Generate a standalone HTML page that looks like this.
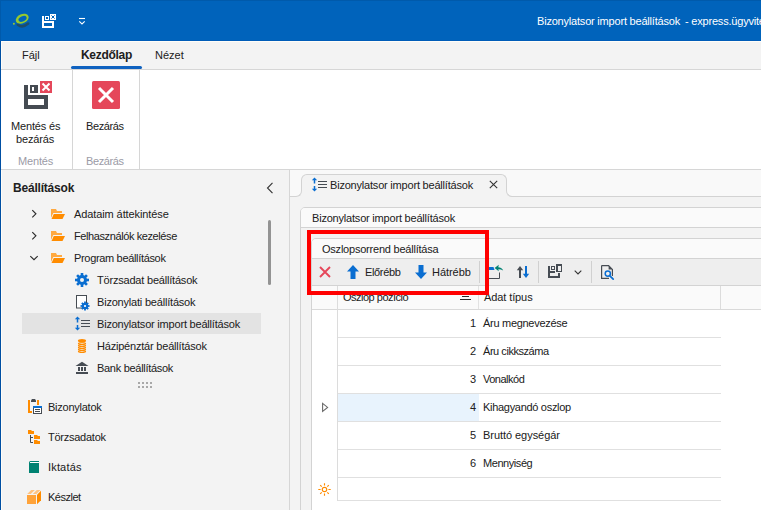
<!DOCTYPE html>
<html><head><meta charset="utf-8">
<style>
html,body{margin:0;padding:0;}
body{width:761px;height:510px;overflow:hidden;position:relative;background:#fafafa;font-family:"Liberation Sans",sans-serif;font-size:11px;color:#202020;}
.a{position:absolute;}
.t{position:absolute;white-space:nowrap;line-height:12px;}
.b{font-weight:bold;}
svg{position:absolute;overflow:visible;}
</style></head><body>

<!-- Title bar -->
<div class="a" style="left:0;top:0;width:761px;height:41px;background:#0063bb;"></div>


<!-- logo -->
<svg style="left:0;top:0" width="40" height="35" viewBox="0 0 40 35">
  <path d="M17.8 24.8 Q22.5 28.4 28.2 23.6" fill="none" stroke="#1c4d6c" stroke-width="2.6" stroke-linecap="round"/>
  <g transform="rotate(-24 22.2 18.7)">
    <path d="M15.4 18.7 A6.8 4.5 0 1 0 29 18.7 A6.8 4.5 0 1 0 15.4 18.7 Z M18.2 18.9 A4.3 2.6 0 1 0 26.8 18.9 A4.3 2.6 0 1 0 18.2 18.9 Z" fill="#95c92e" fill-rule="evenodd"/>
  </g>
  <circle cx="13.9" cy="23.8" r="1" fill="#95c92e"/>
</svg>
<!-- QAT save-close icon -->
<svg style="left:0;top:0" width="60" height="35" viewBox="0 0 60 35" shape-rendering="crispEdges">
  <rect x="42" y="16" width="2" height="12" fill="#fff"/>
  <path d="M42 21 H54 V28 H42 Z M44 23 V26 H52 V23 Z" fill="#fff" fill-rule="evenodd"/>
  <path d="M45 16 H49 V20 H45 Z M46.2 17.2 V18.8 H47.6 V17.2 Z" fill="#fff" fill-rule="evenodd"/>
  <rect x="50" y="14" width="6" height="6" fill="#fff"/>
  <path d="M51.4 15.4 L54.6 18.6 M54.6 15.4 L51.4 18.6" stroke="#0063bb" stroke-width="1" shape-rendering="auto"/>
</svg>
<!-- customize -->
<svg style="left:78px;top:17px" width="8" height="9" viewBox="0 0 8 9">
  <path d="M1 1.5 H7" stroke="#fff" stroke-width="1.1"/>
  <path d="M1.3 4.4 L4 6.9 L6.7 4.4" fill="none" stroke="#fff" stroke-width="1.1"/>
</svg>
<div class="t" style="left:537px;top:15px;color:#fff;letter-spacing:-0.2px;">Bizonylatsor import beállítások</div>
<div class="t" style="left:685px;top:15px;color:#fff;letter-spacing:-0.2px;">- express.ügyvitel</div>

<!-- Ribbon tabs -->
<div class="a" style="left:1px;top:41px;width:760px;height:28px;background:#f3f3f3;"></div>
<div class="a" style="left:1px;top:69px;width:760px;height:1px;background:#d6d6d6;"></div>
<div class="t" style="left:22px;top:49px;">Fájl</div>
<div class="t b" style="left:81px;top:49px;font-size:12px;letter-spacing:-0.3px;">Kezdőlap</div>
<div class="t" style="left:155px;top:49px;">Nézet</div>
<div class="a" style="left:71px;top:66px;width:71px;height:3px;background:#0f62c0;border-radius:2px;"></div>

<!-- Ribbon content -->
<div class="a" style="left:1px;top:70px;width:760px;height:99px;background:#fff;"></div>
<div class="a" style="left:1px;top:169px;width:760px;height:1px;background:#d6d6d6;"></div>
<div class="a" style="left:72px;top:70px;width:1px;height:99px;background:#d6d6d6;"></div>
<div class="a" style="left:139px;top:70px;width:1px;height:99px;background:#d6d6d6;"></div>

<!-- save & close big icon -->
<svg style="left:24px;top:81px" width="28" height="28" viewBox="0 0 28 28">
  <path d="M2 4 V26 H22 V16 H4" fill="none" stroke="#454b52" stroke-width="4"/>
  <rect x="6" y="4" width="8" height="8" fill="#454b52"/>
  <rect x="8" y="6" width="2" height="4" fill="#fff"/>
  <rect x="16" y="0" width="12" height="12" fill="#e5475a"/>
  <path d="M18.5 2.5 L25.5 9.5 M25.5 2.5 L18.5 9.5" stroke="#fff" stroke-width="2"/>
</svg>
<div class="t" style="left:11px;top:120px;letter-spacing:-0.15px;">Mentés és</div>
<div class="t" style="left:16px;top:133px;letter-spacing:-0.15px;">bezárás</div>
<div class="t" style="left:18px;top:155px;color:#9b9ba6;letter-spacing:-0.15px;">Mentés</div>

<!-- close big icon -->
<svg style="left:92px;top:81px" width="28" height="28" viewBox="0 0 28 28">
  <rect x="0" y="0" width="28" height="28" rx="1.5" fill="#e5475a"/>
  <path d="M7 7 L21 21 M21 7 L7 21" stroke="#fff" stroke-width="3"/>
</svg>
<div class="t" style="left:86px;top:120px;letter-spacing:-0.4px;">Bezárás</div>
<div class="t" style="left:86px;top:155px;color:#9b9ba6;letter-spacing:-0.4px;">Bezárás</div>

<!-- Left panel -->
<div class="a" style="left:1px;top:170px;width:288px;height:340px;background:#f3f3f3;"></div>
<div class="a" style="left:289px;top:170px;width:1px;height:340px;background:#d6d6d6;"></div>


<div class="t b" style="left:13px;top:182px;font-size:12px;letter-spacing:-0.2px;">Beállítások</div>
<svg style="left:266px;top:182px" width="8" height="12" viewBox="0 0 8 12">
  <path d="M6.5 0.8 L1.5 6 L6.5 11.2" fill="none" stroke="#333" stroke-width="1.1"/>
</svg>
<!-- scrollbar -->
<div class="a" style="left:268px;top:220px;width:3px;height:65px;background:#939393;border-radius:1.5px;"></div>

<!-- tree rows -->
<svg style="left:31px;top:209px" width="7" height="10" viewBox="0 0 7 10"><path d="M1.3 1.2 L4.9 4.8 L1.3 8.4" fill="none" stroke="#2a2a2a" stroke-width="1.15"/></svg>
<svg style="left:51px;top:209px" width="15" height="10" viewBox="0 0 15 10"><path d="M0 0 H5 L6 2 H11 V4 H2.5 L0 10 Z" fill="#ffa940"/><path d="M2.2 4.3 H14.6 L11.8 10.6 H-0.6 Z" fill="#f3f3f3"/><path d="M2.8 5 H14 L11.5 10 H0.5 Z" fill="#ff8c00"/></svg>
<div class="t" style="left:74px;top:208px;letter-spacing:-0.1px;">Adataim áttekintése</div>

<svg style="left:31px;top:231px" width="7" height="10" viewBox="0 0 7 10"><path d="M1.3 1.2 L4.9 4.8 L1.3 8.4" fill="none" stroke="#2a2a2a" stroke-width="1.15"/></svg>
<svg style="left:51px;top:231px" width="15" height="10" viewBox="0 0 15 10"><path d="M0 0 H5 L6 2 H11 V4 H2.5 L0 10 Z" fill="#ffa940"/><path d="M2.2 4.3 H14.6 L11.8 10.6 H-0.6 Z" fill="#f3f3f3"/><path d="M2.8 5 H14 L11.5 10 H0.5 Z" fill="#ff8c00"/></svg>
<div class="t" style="left:74px;top:230px;letter-spacing:-0.4px;">Felhasználók kezelése</div>

<svg style="left:29px;top:255px" width="10" height="6" viewBox="0 0 10 6"><path d="M1.3 1.2 L5 4.6 L8.7 1.2" fill="none" stroke="#2a2a2a" stroke-width="1.15"/></svg>
<svg style="left:51px;top:253px" width="15" height="10" viewBox="0 0 15 10"><path d="M0 0 H5 L6 2 H11 V4 H2.5 L0 10 Z" fill="#ffa940"/><path d="M2.2 4.3 H14.6 L11.8 10.6 H-0.6 Z" fill="#f3f3f3"/><path d="M2.8 5 H14 L11.5 10 H0.5 Z" fill="#ff8c00"/></svg>
<div class="t" style="left:74px;top:252px;letter-spacing:-0.33px;">Program beállítások</div>

<!-- child rows -->
<svg style="left:75px;top:273px" width="14" height="14" viewBox="-7 -7 14 14">
  <g fill="#0a6ed1">
    <circle r="5"/>
    <rect x="-1.3" y="-7" width="2.6" height="14"/>
    <rect x="-7" y="-1.3" width="14" height="2.6"/>
    <rect x="-1.3" y="-7" width="2.6" height="14" transform="rotate(45)"/>
    <rect x="-1.3" y="-7" width="2.6" height="14" transform="rotate(-45)"/>
  </g>
  <circle r="2" fill="#f3f3f3"/>
</svg>
<div class="t" style="left:97px;top:274px;letter-spacing:-0.2px;">Törzsadat beállítások</div>

<svg style="left:76px;top:295px" width="14" height="16" viewBox="0 0 14 16">
  <rect x="0.5" y="0.5" width="10" height="12.5" fill="#fff" stroke="#464c53" stroke-width="1"/>
  <g transform="translate(9 11)" fill="#0a6ed1">
    <circle r="3.2"/>
    <rect x="-0.9" y="-4.5" width="1.8" height="9"/>
    <rect x="-4.5" y="-0.9" width="9" height="1.8"/>
    <rect x="-0.9" y="-4.5" width="1.8" height="9" transform="rotate(45)"/>
    <rect x="-0.9" y="-4.5" width="1.8" height="9" transform="rotate(-45)"/>
  </g>
  <circle cx="9" cy="11" r="1.1" fill="#fff"/>
</svg>
<div class="t" style="left:97px;top:296px;letter-spacing:-0.2px;">Bizonylati beállítások</div>

<div class="a" style="left:22px;top:313px;width:239px;height:21px;background:#e3e3e3;"></div>
<svg style="left:74px;top:316px" width="17" height="15" viewBox="0 0 17 15">
  <path d="M3.5 2.5 V6.6 M3.5 8.9 V12.5" stroke="#0a6ed1" stroke-width="1.5"/>
  <path d="M0.8 3.2 L3.5 0.4 L6.2 3.2 Z M0.8 11.8 L3.5 14.6 L6.2 11.8 Z" fill="#0a6ed1"/>
  <path d="M7 4.5 H16 M7 7.5 H16 M7 10.5 H16" stroke="#464c53" stroke-width="1.2"/>
</svg>
<div class="t" style="left:97px;top:318px;letter-spacing:-0.2px;">Bizonylatsor import beállítások</div>

<svg style="left:0;top:0" width="100" height="400" viewBox="0 0 100 400">
  <ellipse cx="82" cy="340.8" rx="4.1" ry="1.8" fill="#ff8c00"/>
  <g fill="none" stroke="#ff8c00" stroke-width="1.05">
    <ellipse cx="82" cy="343.6" rx="3.6" ry="0.95"/>
    <ellipse cx="82" cy="345.6" rx="3.6" ry="0.95"/>
    <ellipse cx="82" cy="347.6" rx="3.6" ry="0.95"/>
    <ellipse cx="82" cy="349.6" rx="3.6" ry="0.95"/>
    <ellipse cx="82" cy="351.6" rx="3.6" ry="0.95"/>
  </g>
</svg>
<div class="t" style="left:97px;top:340px;letter-spacing:-0.2px;">Házipénztár beállítások</div>

<svg style="left:0;top:0" width="100" height="400" viewBox="0 0 100 400">
  <path d="M75.5 366 L82 361.8 L88.5 366 Z" fill="#464c53"/>
  <g fill="#464c53" shape-rendering="crispEdges">
    <rect x="78" y="367" width="2" height="4"/>
    <rect x="81" y="367" width="2" height="4"/>
    <rect x="84" y="367" width="2" height="4"/>
    <rect x="76" y="372" width="12" height="2"/>
  </g>
</svg>
<div class="t" style="left:97px;top:362px;letter-spacing:-0.29px;">Bank beállítások</div>

<!-- splitter grip -->
<svg style="left:138px;top:382px" width="15" height="7" viewBox="0 0 15 7" fill="#a8a8a8">
  <rect x="0" y="0" width="2" height="2"/><rect x="4" y="0" width="2" height="2"/><rect x="8" y="0" width="2" height="2"/><rect x="12" y="0" width="2" height="2"/>
  <rect x="0" y="4" width="2" height="2"/><rect x="4" y="4" width="2" height="2"/><rect x="8" y="4" width="2" height="2"/><rect x="12" y="4" width="2" height="2"/>
</svg>

<!-- nav bar -->
<svg style="left:0;top:0" width="60" height="510" viewBox="0 0 60 510" shape-rendering="crispEdges">
  <rect x="28" y="400" width="2" height="13" fill="#ff8c00"/>
  <rect x="28" y="411" width="4" height="2" fill="#ff8c00"/>
  <rect x="37" y="400" width="2" height="5" fill="#ff8c00"/>
  <path d="M31 402 V400.5 L32 399 H35 L36 400.5 V402 Z" fill="#464c53" shape-rendering="auto"/>
  <rect x="33" y="406" width="9" height="8" fill="#464c53"/>
  <rect x="34" y="408" width="7" height="5" fill="#fff"/>
  <rect x="33" y="406" width="9" height="2" fill="#0a6ed1"/>
  <rect x="35" y="409" width="5" height="1" fill="#464c53"/>
  <rect x="35" y="411" width="5" height="1" fill="#464c53"/>
</svg>
<div class="t" style="left:48px;top:401px;letter-spacing:-0.25px;">Bizonylatok</div>

<svg style="left:0;top:0" width="60" height="510" viewBox="0 0 60 510">
  <path d="M28 430 H31 L32 431 H34 V434 H28 Z" fill="#ff8c00"/>
  <path d="M34 435 H37 L38 436 H40 V439 H34 Z" fill="#ff8c00"/>
  <path d="M34 440 H37 L38 441 H40 V444 H34 Z" fill="#ff8c00"/>
  <path d="M30.5 435 V442.5 H33 M30.5 437.5 H33" fill="none" stroke="#464c53" stroke-width="1"/>
</svg>
<div class="t" style="left:48px;top:431px;letter-spacing:-0.25px;">Törzsadatok</div>

<svg style="left:0;top:0" width="60" height="510" viewBox="0 0 60 510">
  <path d="M29 462.5 Q29 461 30.5 461 H39 V473 H29 Z" fill="#008272"/>
  <rect x="30" y="462" width="9" height="1" fill="#fff"/>
</svg>
<div class="t" style="left:48px;top:461px;letter-spacing:0.17px;">Iktatás</div>

<svg style="left:0;top:0" width="60" height="510" viewBox="0 0 60 510">
  <rect x="27" y="495" width="9" height="9" fill="#ffa33a"/>
  <path d="M37 494.8 L41 490.8 V500.2 L37 504.2 Z" fill="#ff8c00"/>
  <path d="M27.2 494 L31.2 490 H34.8 L30.8 494 Z M32.8 494 L36.8 490 H40.4 L36.4 494 Z" fill="#ffc380"/>
</svg>
<div class="t" style="left:48px;top:491px;letter-spacing:-0.5px;">Készlet</div>


<!-- Right panel -->
<div class="a" style="left:290px;top:170px;width:471px;height:340px;background:#f3f3f3;"></div>
<div class="a" style="left:290px;top:170px;width:471px;height:26px;background:#f9f9f9;"></div>
<div class="a" style="left:290px;top:196px;width:471px;height:1px;background:#d3d3d3;"></div>
<!-- doc tab -->
<div class="a" style="left:301px;top:174px;width:204px;height:16px;background:#f3f3f3;border:1px solid #d3d3d3;border-bottom:none;border-radius:6px 6px 0 0;"></div>
<div class="a" style="left:296px;top:189px;width:215px;height:8px;background:#f3f3f3;"></div>
<div class="a" style="left:291px;top:186px;width:10px;height:10px;background:#f9f9f9;border-right:1px solid #d3d3d3;border-bottom:1px solid #d3d3d3;border-radius:0 0 6px 0;"></div>

<div class="a" style="left:506px;top:186px;width:10px;height:10px;background:#f9f9f9;border-left:1px solid #d3d3d3;border-bottom:1px solid #d3d3d3;border-radius:0 0 0 6px;"></div>
<div class="a" style="left:302px;top:197px;width:205px;height:10px;background:#f3f3f3;"></div>

<svg style="left:311px;top:177px" width="17" height="15" viewBox="0 0 17 15">
  <path d="M3.5 2.5 V6.6 M3.5 8.9 V12.5" stroke="#0a6ed1" stroke-width="1.5"/>
  <path d="M0.8 3.2 L3.5 0.4 L6.2 3.2 Z M0.8 11.8 L3.5 14.6 L6.2 11.8 Z" fill="#0a6ed1"/>
  <path d="M7 4.5 H16 M7 7.5 H16 M7 10.5 H16" stroke="#464c53" stroke-width="1.2"/>
</svg>
<div class="t" style="left:330px;top:179px;letter-spacing:-0.2px;">Bizonylatsor import beállítások</div>
<svg style="left:489px;top:180px" width="9" height="9" viewBox="0 0 9 9"><path d="M0.8 0.8 L8.2 8.2 M8.2 0.8 L0.8 8.2" stroke="#333" stroke-width="1.1"/></svg>

<!-- group box -->
<div class="a" style="left:300px;top:207px;width:470px;height:320px;background:#f3f3f3;border:1px solid #d3d3d3;border-radius:5px;"></div>
<div class="a" style="left:301px;top:208px;width:460px;height:19px;background:#fafafa;border-radius:4px 0 0 0;"></div>
<div class="a" style="left:301px;top:227px;width:460px;height:1px;background:#d3d3d3;"></div>
<div class="t" style="left:312px;top:212px;letter-spacing:-0.2px;">Bizonylatsor import beállítások</div>

<!-- inner group -->
<div class="a" style="left:311px;top:238px;width:470px;height:300px;background:#f3f3f3;border:1px solid #d3d3d3;border-radius:5px;"></div>
<div class="a" style="left:312px;top:239px;width:449px;height:19px;background:#fafafa;border-radius:4px 0 0 0;"></div>
<div class="a" style="left:312px;top:258px;width:449px;height:1px;background:#d3d3d3;"></div>
<div class="t" style="left:322px;top:243px;letter-spacing:-0.22px;">Oszlopsorrend beállítása</div>

<!-- toolbar -->
<div class="a" style="left:312px;top:259px;width:449px;height:26px;background:#eeeeee;"></div>
<div class="a" style="left:312px;top:285px;width:449px;height:1px;background:#d3d3d3;"></div>

<!-- grid -->
<div class="a" style="left:312px;top:286px;width:449px;height:224px;background:#fff;"></div>
<div class="a" style="left:312px;top:286px;width:449px;height:23px;background:#fafafa;"></div>
<div class="a" style="left:312px;top:309px;width:449px;height:1px;background:#d9d9d9;"></div>
<div class="a" style="left:337px;top:286px;width:1px;height:215px;background:#dcdcdc;"></div>
<div class="a" style="left:478px;top:286px;width:1px;height:23px;background:#e2e2e2;"></div>
<div class="a" style="left:720px;top:286px;width:1px;height:23px;background:#dcdcdc;"></div>
<div class="t" style="left:343px;top:291px;letter-spacing:-0.5px;">Oszlop pozíció</div>
<svg style="left:459px;top:292px" width="12" height="9" viewBox="0 0 12 9"><path d="M4 1.5 H9 M3 4.5 H10 M1 7.5 H12" stroke="#2a2a2a" stroke-width="1"/></svg>
<div class="t" style="left:484px;top:291px;letter-spacing:-0.1px;">Adat típus</div>

<div class="a" style="left:338px;top:394px;width:141px;height:27px;background:#e8f3fd;"></div>
<div class="a" style="left:338px;top:337px;width:383px;height:1px;background:#e0e0e0;"></div>
<div class="a" style="left:338px;top:365px;width:383px;height:1px;background:#e0e0e0;"></div>
<div class="a" style="left:338px;top:393px;width:383px;height:1px;background:#e0e0e0;"></div>
<div class="a" style="left:338px;top:421px;width:383px;height:1px;background:#e0e0e0;"></div>
<div class="a" style="left:338px;top:449px;width:383px;height:1px;background:#e0e0e0;"></div>
<div class="a" style="left:338px;top:477px;width:383px;height:1px;background:#e0e0e0;"></div>
<div class="a" style="left:338px;top:500px;width:383px;height:1px;background:#e0e0e0;"></div>

<div class="t" style="left:470px;top:317px;">1</div><div class="t" style="left:483px;top:317px;letter-spacing:-0.29px;">Áru megnevezése</div>
<div class="t" style="left:470px;top:345px;">2</div><div class="t" style="left:483px;top:345px;letter-spacing:-0.45px;">Áru cikkszáma</div>
<div class="t" style="left:470px;top:373px;">3</div><div class="t" style="left:483px;top:373px;letter-spacing:-0.5px;">Vonalkód</div>
<div class="t" style="left:470px;top:401px;">4</div><div class="t" style="left:483px;top:401px;letter-spacing:-0.3px;">Kihagyandó oszlop</div>
<div class="t" style="left:470px;top:429px;">5</div><div class="t" style="left:483px;top:429px;letter-spacing:-0.05px;">Bruttó egységár</div>
<div class="t" style="left:470px;top:457px;">6</div><div class="t" style="left:483px;top:457px;letter-spacing:-0.44px;">Mennyiség</div>

<svg style="left:322px;top:402px" width="8" height="11" viewBox="0 0 8 11"><path d="M0.6 1.4 L5.6 5.4 L0.6 9.4 Z" fill="none" stroke="#6a6a6a" stroke-width="1.1" stroke-linejoin="miter"/></svg>
<svg style="left:317px;top:482px" width="15" height="15" viewBox="-7.5 -7.5 15 15">
  <circle r="2.2" fill="none" stroke="#ff8c00" stroke-width="1.2"/>
  <path d="M0 -6.2 V-3.9 M0 3.9 V6.2 M-6.2 0 H-3.9 M3.9 0 H6.2 M-4.3 -4.3 L-2.8 -2.8 M4.3 4.3 L2.8 2.8 M-4.3 4.3 L-2.8 2.8 M4.3 -4.3 L2.8 -2.8" stroke="#ff8c00" stroke-width="1.15"/>
</svg>

<!-- toolbar items -->
<svg style="left:319px;top:266px" width="12" height="12" viewBox="0 0 12 12"><path d="M1 1 L11 11 M11 1 L1 11" stroke="#e5475a" stroke-width="1.9"/></svg>
<svg style="left:347px;top:265px" width="12" height="14" viewBox="0 0 12 14"><path d="M6 0 L12 6.5 H8.5 V14 H3.5 V6.5 H0 Z" fill="#0a6ed1"/></svg>
<div class="t" style="left:365px;top:266px;letter-spacing:-0.35px;">Előrébb</div>
<svg style="left:415px;top:265px" width="12" height="14" viewBox="0 0 12 14"><path d="M6 14 L12 7.5 H8.5 V0 H3.5 V7.5 H0 Z" fill="#0a6ed1"/></svg>
<div class="t" style="left:432px;top:266px;letter-spacing:-0.05px;">Hátrébb</div>
<div class="a" style="left:479px;top:261px;width:1px;height:22px;background:#d0d0d0;"></div>

<svg style="left:0;top:0" width="761" height="510" viewBox="0 0 761 510">
  <!-- reset layout -->
  <path d="M489 267 H493.5 L494.5 270 H489 Z" fill="#0a6ed1"/>
  <path d="M494.6 268 L498.8 264.8 L498.3 267.2 Q502 267.6 503.2 270.6 Q501 269.2 498.3 269.2 L498.8 271.3 Z" fill="#008272"/>
  <path d="M499.5 272.5 V278.5 H488" fill="none" stroke="#464c53" stroke-width="1"/>
  <!-- sort -->
  <path d="M516.8 270.2 L520 266 L523.2 270.2 Z" fill="#464c53"/>
  <rect x="519" y="269.5" width="2" height="8.5" fill="#464c53"/>
  <rect x="525" y="266" width="2" height="8.5" fill="#0a6ed1"/>
  <path d="M522.8 273.8 L526 278 L529.2 273.8 Z" fill="#0a6ed1"/>
  <!-- layout -->
  <g fill="#464c53" shape-rendering="crispEdges">
    <rect x="548" y="266" width="2" height="12"/>
    <rect x="548" y="276" width="12" height="2"/>
    <rect x="558" y="273" width="2" height="5"/>
    <rect x="550" y="271" width="5" height="2"/>
    <path d="M551 266 H555 V270 H551 Z M552 267 V269 H553.5 V267 Z" fill-rule="evenodd"/>
    <path d="M556 264 H562 V272 H556 Z M557.5 265.5 V270.5 H560.5 V265.5 Z" fill-rule="evenodd"/>
  </g>
  <!-- preview -->
  <path d="M601.6 265.6 H608.6 L612.4 269.4 V276" fill="none" stroke="#464c53" stroke-width="1.2"/>
  <path d="M601.6 265.6 V278.4 H609" fill="none" stroke="#464c53" stroke-width="1.2"/>
  <path d="M608.6 265.6 V269.4 H612.4 Z" fill="#464c53"/>
  <circle cx="607.8" cy="273.6" r="2.6" fill="none" stroke="#0a6ed1" stroke-width="1.5"/>
  <path d="M609.6 275.6 L613.2 279.2" stroke="#0a6ed1" stroke-width="1.7" stroke-linecap="round"/>
</svg>
<svg style="left:574px;top:270px" width="8" height="5" viewBox="0 0 8 5"><path d="M0.7 0.7 L4 4 L7.3 0.7" fill="none" stroke="#333" stroke-width="1.1"/></svg>
<div class="a" style="left:538px;top:261px;width:1px;height:22px;background:#d0d0d0;"></div>
<div class="a" style="left:591px;top:261px;width:1px;height:22px;background:#d0d0d0;"></div>

<!-- red highlight -->
<div class="a" style="left:307px;top:230px;width:174px;height:57px;border:4px solid #ff0000;"></div>


<!-- window borders -->
<div class="a" style="left:0;top:0;width:761px;height:1px;background:#005aab;"></div>
<div class="a" style="left:0;top:0;width:1px;height:41px;background:#005aab;"></div>
<div class="a" style="left:0;top:40px;width:761px;height:1px;background:#005cb8;"></div>
<div class="a" style="left:0;top:41px;width:1px;height:469px;background:#004fa3;"></div>
<div class="a" style="left:1px;top:41px;width:760px;height:1px;background:#fffdf8;"></div>
<div class="a" style="left:1px;top:41px;width:1px;height:28px;background:#fffdf8;"></div>
<div class="a" style="left:1px;top:170px;width:1px;height:340px;background:#fffdf8;"></div>
</body></html>
